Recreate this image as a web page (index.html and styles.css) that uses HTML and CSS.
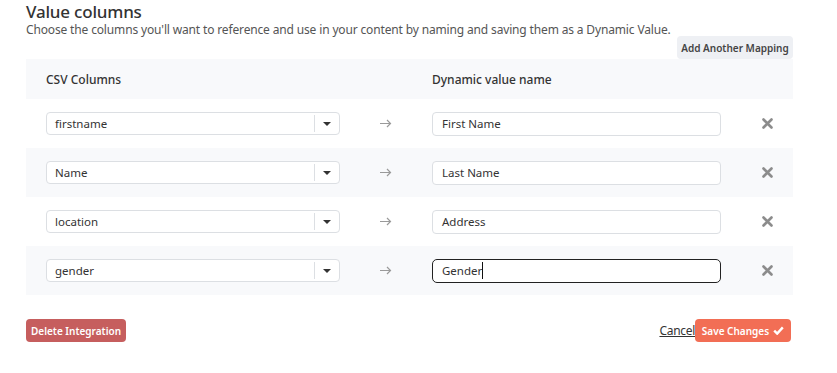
FILE: index.html
```html
<!DOCTYPE html>
<html lang="en">
<head>
    <meta charset="UTF-8">
    <title>Value columns</title>
    <link rel="stylesheet" href="styles.css">
</head>
<body>
    <div class="mapping">
        <h2 class="mapping-title">Value columns</h2>
        <p class="mapping-desc">Choose the columns you'll want to reference and use in your content by naming and saving them as a Dynamic Value.</p>

        <div class="mapping-actions">
            <button class="btn btn-light">Add Another Mapping</button>
        </div>

        <div class="mapping-table">
            <div class="map-row map-head">
                <div class="head-cell">CSV Columns</div>
                <div></div>
                <div class="head-cell">Dynamic value name</div>
                <div></div>
            </div>

            <div class="map-row">
                <div class="select"><span class="select-value">firstname</span><span class="select-caret"></span></div>
                <div class="arrow"><svg width="12" height="9" viewBox="0 0 12 9"><path d="M0 4.5H11M7 1l3.5 3.5L7 8" fill="none" stroke="#9a9a9a" stroke-width="1.2"/></svg></div>
                <div class="field">First Name</div>
                <div class="remove"><svg width="11" height="11" viewBox="0 0 11 11"><path d="M1.5 1.5l8 8M9.5 1.5l-8 8" stroke="#8c8c8c" stroke-width="2.6" stroke-linecap="round"/></svg></div>
            </div>
            <div class="map-row striped">
                <div class="select"><span class="select-value">Name</span><span class="select-caret"></span></div>
                <div class="arrow"><svg width="12" height="9" viewBox="0 0 12 9"><path d="M0 4.5H11M7 1l3.5 3.5L7 8" fill="none" stroke="#9a9a9a" stroke-width="1.2"/></svg></div>
                <div class="field">Last Name</div>
                <div class="remove"><svg width="11" height="11" viewBox="0 0 11 11"><path d="M1.5 1.5l8 8M9.5 1.5l-8 8" stroke="#8c8c8c" stroke-width="2.6" stroke-linecap="round"/></svg></div>
            </div>
            <div class="map-row">
                <div class="select"><span class="select-value">location</span><span class="select-caret"></span></div>
                <div class="arrow"><svg width="12" height="9" viewBox="0 0 12 9"><path d="M0 4.5H11M7 1l3.5 3.5L7 8" fill="none" stroke="#9a9a9a" stroke-width="1.2"/></svg></div>
                <div class="field">Address</div>
                <div class="remove"><svg width="11" height="11" viewBox="0 0 11 11"><path d="M1.5 1.5l8 8M9.5 1.5l-8 8" stroke="#8c8c8c" stroke-width="2.6" stroke-linecap="round"/></svg></div>
            </div>
            <div class="map-row striped">
                <div class="select"><span class="select-value">gender</span><span class="select-caret"></span></div>
                <div class="arrow"><svg width="12" height="9" viewBox="0 0 12 9"><path d="M0 4.5H11M7 1l3.5 3.5L7 8" fill="none" stroke="#9a9a9a" stroke-width="1.2"/></svg></div>
                <div class="field focused">Gender<span class="cursor"></span></div>
                <div class="remove"><svg width="11" height="11" viewBox="0 0 11 11"><path d="M1.5 1.5l8 8M9.5 1.5l-8 8" stroke="#8c8c8c" stroke-width="2.6" stroke-linecap="round"/></svg></div>
            </div>
        </div>

        <div class="mapping-footer">
            <button class="btn btn-danger">Delete Integration</button>
            <div class="footer-right">
                <a class="cancel-link" href="#">Cancel</a>
                <button class="btn btn-save">Save Changes
                    <svg class="check" width="11" height="9" viewBox="0 0 11 9"><path d="M1.2 4.6l3 3L9.8 1.4" fill="none" stroke="#fff" stroke-width="2.4"/></svg>
                </button>
            </div>
        </div>
    </div>
</body>
</html>
```

FILE: styles.css
```css
body {
    margin: 0;
    font-family: "Noto Sans", "Open Sans", sans-serif;
    color: #333;
    background: #fff;
}
.mapping {
    width: 767px;
    margin-left: 26px;
    padding-top: 1px;
}
.mapping-title {
    margin: 0;
    font-size: 17px;
    font-weight: 500;
    line-height: 21px;
    letter-spacing: -0.2px;
    color: #333;
}
.mapping-desc {
    margin: 0;
    font-size: 12px;
    line-height: 15px;
    letter-spacing: -0.15px;
    color: #555;
}
.mapping-actions {
    display: flex;
    justify-content: flex-end;
    margin-top: -1px;
}
.btn {
    font-family: inherit;
    border: none;
    border-radius: 4px;
    height: 23px;
    padding: 0 4px;
    font-size: 10px;
    font-weight: 600;
    white-space: nowrap;
    cursor: pointer;
}
.btn-light {
    background: #eef0f4;
    color: #444;
    width: 116px;
}
.map-row {
    display: grid;
    grid-template-columns: 294px 92px 289px 1fr;
    align-items: center;
    height: 49px;
    padding-left: 20px;
}
.map-head {
    height: 40px;
    background: #f8f9fb;
}
.striped {
    background: #f8f9fb;
}
.head-cell {
    font-size: 12px;
    font-weight: 500;
    color: #333;
}
.select {
    display: flex;
    height: 23px;
    border: 1px solid #dcdfe3;
    border-radius: 4px;
    background: #fff;
    box-sizing: border-box;
}
.select-value {
    flex: 1;
    padding-left: 8px;
    font-size: 11.5px;
    line-height: 22px;
}
.select-caret {
    width: 24px;
    border-left: 1px solid #dcdfe3;
    margin: 2px 0;
    position: relative;
}
.select-caret::after {
    content: "";
    position: absolute;
    left: 8px;
    top: 7px;
    border-left: 4px solid transparent;
    border-right: 4px solid transparent;
    border-top: 4px solid #333;
}
.arrow {
    display: flex;
    justify-content: center;
}
.field {
    height: 24px;
    box-sizing: border-box;
    border: 1px solid #dcdfe3;
    border-radius: 4px;
    background: #fff;
    padding-left: 9px;
    font-size: 11.5px;
    line-height: 22px;
}
.field.focused {
    border-color: #222;
    border-radius: 5px;
}
.cursor {
    display: inline-block;
    width: 1px;
    height: 17px;
    background: #111;
    vertical-align: middle;
    margin-top: -2px;
}
.remove {
    display: flex;
    margin-left: 41px;
}
.mapping-footer {
    display: flex;
    justify-content: space-between;
    align-items: center;
    margin-top: 24px;
}
.btn-danger {
    background: #c65e5e;
    color: #fff;
    width: 100px;
}
.footer-right {
    display: flex;
    align-items: center;
    margin-right: 2px;
}
.cancel-link {
    color: #333;
    font-size: 12px;
    letter-spacing: -0.3px;
}
.btn-save {
    background: #f26e55;
    color: #fff;
    width: 96px;
    display: flex;
    align-items: center;
    justify-content: center;
    gap: 4px;
}
```
